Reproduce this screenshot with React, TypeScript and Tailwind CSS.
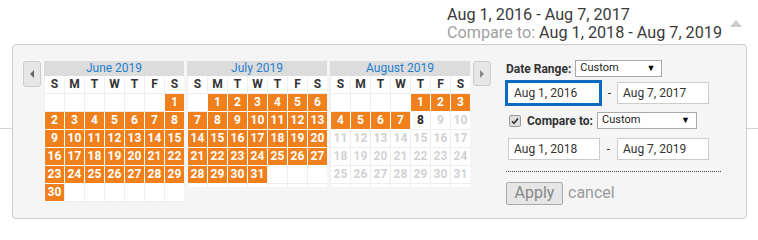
import React from 'react';

type DayKind = 'on' | 'empty' | 'off' | 'today';

interface Day {
  d?: number;
  kind: DayKind;
}

interface MonthProps {
  title: string;
  days: Day[];
  strip?: boolean;
}

const WEEK = ['S', 'M', 'T', 'W', 'T', 'F', 'S'];

const range = (from: number, to: number, kind: DayKind): Day[] =>
  Array.from({ length: to - from + 1 }, (_, i) => ({ d: from + i, kind }));

const blanks = (n: number): Day[] => Array.from({ length: n }, () => ({ kind: 'empty' as DayKind }));

const june: Day[] = [...blanks(6), ...range(1, 30, 'on'), ...blanks(6)];
const july: Day[] = [...blanks(1), ...range(1, 31, 'on'), ...blanks(3)];
const august: Day[] = [
  ...blanks(4),
  ...range(1, 7, 'on'),
  { d: 8, kind: 'today' },
  ...range(9, 31, 'off'),
];

const cellClass: Record<DayKind, string> = {
  on: 'bg-[#ef801b] text-white border-white',
  empty: 'bg-white border-[#eeeeee]',
  off: 'bg-white text-[#d2d2d2] border-[#eeeeee]',
  today: 'bg-white text-[#222] border-[#eeeeee]',
};

const Month: React.FC<MonthProps> = ({ title, days, strip }) => {
  return (
    <div className="w-[140px] flex flex-col">
      <div className="h-[15px] bg-[#dcdcdc] text-[12px] leading-[15px] text-center text-[#1f7fd1]">
        {title}
      </div>
      <div className="grid grid-cols-7 bg-white">
        {WEEK.map((w, i) => (
          <div
            key={i}
            className="h-[18px] border-l border-b border-[#eeeeee] text-[12px] leading-[17px] font-bold text-center text-[#333]"
          >
            {w}
          </div>
        ))}
        {days.map((day, i) => (
          <div
            key={i}
            className={`h-[18px] border-l border-b text-[12px] leading-[17px] font-bold text-center ${cellClass[day.kind]}`}
          >
            {day.d}
          </div>
        ))}
        {strip &&
          WEEK.map((_, i) => <div key={`s${i}`} className="h-[3px] border-l border-[#eeeeee] bg-white" />)}
      </div>
    </div>
  );
};

const NavButton: React.FC<{ dir: 'left' | 'right'; tall?: boolean }> = ({ dir, tall }) => (
  <div
    className={`w-[18px] ${tall ? 'h-[26px]' : 'h-[25px]'} bg-[#e6e6e6] border border-[#cccccc] rounded-[3px] flex items-center justify-center`}
  >
    {dir === 'left' ? (
      <div className="w-0 h-0 border-t-[4px] border-b-[4px] border-r-[4px] border-t-transparent border-b-transparent border-r-[#666]" />
    ) : (
      <div className="w-0 h-0 border-t-[4px] border-b-[4px] border-l-[4px] border-t-transparent border-b-transparent border-l-[#888]" />
    )}
  </div>
);

const Select: React.FC<{ width: string }> = ({ width }) => (
  <div
    className={`${width} h-[17px] bg-white border border-[#a9a9a9] flex items-center justify-between pl-[4px] pr-[6px] text-[11px] text-[#222]`}
  >
    <span>Custom</span>
    <span className="text-[9px] text-black">▼</span>
  </div>
);

const DateInput: React.FC<{ value: string }> = ({ value }) => (
  <div className="w-[92px] h-[22px] bg-white border border-[#cccccc] flex items-center pl-[5px] text-[12px] text-[#333]">
    {value}
  </div>
);

const App: React.FC = () => {
  return (
    <div className="relative w-[758px] h-[231px] bg-white font-['Roboto',sans-serif] overflow-hidden">
      <div className="h-[129px] border-b border-[#d5d5d5]">
        <div className="ml-[447px] pt-[6px] flex items-start">
          <div className="text-[16.2px] leading-[18px]">
            <div className="text-[#3a3a3a]">Aug 1, 2016 - Aug 7, 2017</div>
            <div>
              <span className="text-[#a0a0a0]">Compare to: </span>
              <span className="text-[#3a3a3a]">Aug 1, 2018 - Aug 7, 2019</span>
            </div>
          </div>
          <div className="ml-[8px] mt-[14px] w-0 h-0 border-l-[6px] border-r-[6px] border-b-[7px] border-l-transparent border-r-transparent border-b-[#cccccc]" />
        </div>
      </div>

      <div className="absolute left-[12px] top-[44px] w-[735px] h-[175px] bg-[#f5f5f5] border border-[#cccccc] rounded-[4px] pl-[10px] pt-[15px] flex items-start">
        <div className="flex items-start gap-[3px] mt-[1px]">
          <NavButton dir="left" tall />
          <Month title="June 2019" days={june} />
          <Month title="July 2019" days={july} strip />
          <Month title="August 2019" days={august} strip />
          <NavButton dir="right" />
        </div>

        <div className="ml-[15px] flex flex-col text-[#333]">
          <div className="h-[17px] flex items-center">
            <span className="text-[12px] font-bold">Date Range:</span>
            <div className="ml-[4px]">
              <Select width="w-[87px]" />
            </div>
          </div>

          <div className="mt-[3px] ml-[-1px] flex items-center">
            <div className="w-[97px] h-[26px] bg-white border-[3px] border-[#0b6cbf] flex items-center pl-[6px] text-[12px] text-[#333]">
              Aug 1, 2016
            </div>
            <span className="w-[15px] text-center text-[12px]">-</span>
            <DateInput value="Aug 7, 2017" />
          </div>

          <div className="mt-[6px] h-[17px] flex items-center">
            <div className="ml-[3px] w-[12px] h-[12px] bg-[#dedede] border border-[#9a9a9a] rounded-[2px] flex items-center justify-center">
              <svg width="8" height="8" viewBox="0 0 8 8">
                <path d="M1 4.2 L3 6.2 L7 1.5" fill="none" stroke="#333" strokeWidth="1.6" />
              </svg>
            </div>
            <span className="ml-[6px] text-[12px] font-bold">Compare to:</span>
            <div className="ml-[4px]">
              <Select width="w-[100px]" />
            </div>
          </div>

          <div className="mt-[9px] ml-[2px] flex items-center">
            <DateInput value="Aug 1, 2018" />
            <span className="w-[17px] text-center text-[12px]">-</span>
            <DateInput value="Aug 7, 2019" />
          </div>

          <div className="mt-[11px] w-[215px] border-t border-dotted border-[#444]" />

          <div className="mt-[9px] flex items-center">
            <button className="w-[57px] h-[23px] bg-[#e6e6e6] border border-[#aaaaaa] rounded-[2px] text-[16px] leading-[20px] text-[#888]">
              Apply
            </button>
            <span className="ml-[5px] text-[16px] text-[#9a9a9a]">cancel</span>
          </div>
        </div>
      </div>
    </div>
  );
};

export default App;
